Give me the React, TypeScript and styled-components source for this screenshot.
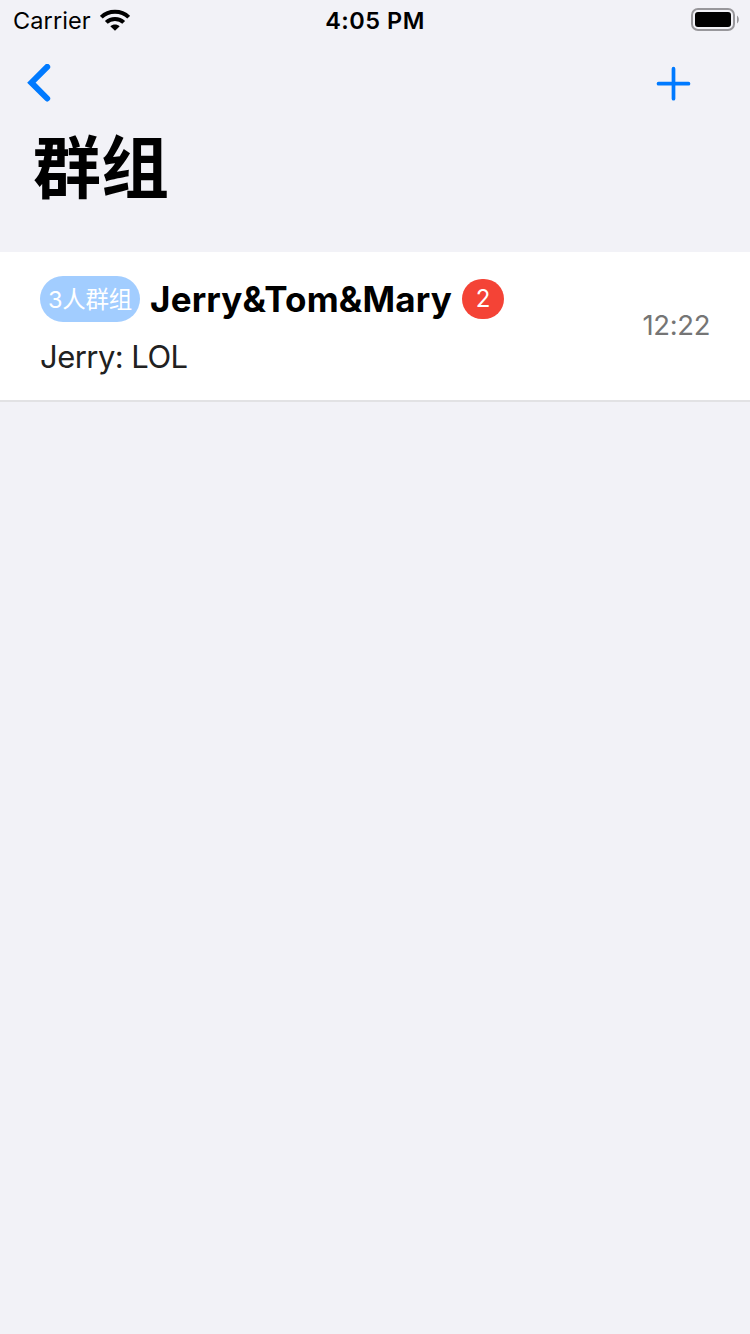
import React from "react";
import styled, { createGlobalStyle } from "styled-components";

const GlobalStyle = createGlobalStyle`
  * { box-sizing: border-box; }
  body {
    margin: 0;
    background: #f2f2f7;
    font-family: Inter, "Noto Sans CJK SC", sans-serif;
    color: #000;
  }
`;

const Screen = styled.div`
  width: 750px;
  height: 1334px;
  display: flex;
  flex-direction: column;
  background: #f2f2f7;
  overflow: hidden;
`;

const StatusBar = styled.header`
  height: 40px;
  padding: 0 13px;
  display: grid;
  grid-template-columns: 1fr auto 1fr;
  align-items: center;
  line-height: 38px;
`;

const Carrier = styled.div`
  display: flex;
  align-items: center;
  gap: 9px;
  font-size: 23.5px;
  letter-spacing: 0.1px;
`;

const CarrierName = styled.span`
  padding-top: 2px;
`;

const Clock = styled.div`
  padding-top: 2px;
  font-size: 23.5px;
  font-weight: 600;
  letter-spacing: 0.5px;
`;

const BatterySlot = styled.div`
  display: flex;
  justify-content: flex-end;
  margin-right: -2px;
`;

const NavBar = styled.nav`
  height: 88px;
  padding: 0 58px 0 26px;
  display: flex;
  align-items: center;
  justify-content: space-between;
`;

const IconButton = styled.button`
  display: flex;
  padding: 0;
  border: 0;
  background: none;
  color: #007aff;
`;

const Title = styled.h1`
  height: 124px;
  margin: 0;
  padding: 0 0 0 33px;
  font-family: "Noto Sans CJK SC", sans-serif;
  font-size: 68px;
  font-weight: 700;
  line-height: 72px;
`;

const GroupRow = styled.article`
  height: 150px;
  padding: 24px 40px 0;
  display: flex;
  justify-content: space-between;
  background: #fff;
  border-bottom: 2px solid #e2e2e4;
`;

const Summary = styled.div`
  display: flex;
  flex-direction: column;
`;

const Heading = styled.div`
  height: 46px;
  display: flex;
  align-items: center;
  gap: 10px;
`;

const MemberTag = styled.span`
  width: 100px;
  height: 46px;
  border-radius: 23px;
  background: #a2cdff;
  color: #fff;
  font-size: 23.5px;
  letter-spacing: -0.2px;
  line-height: 48px;
  text-align: center;
  white-space: nowrap;
`;

const GroupName = styled.span`
  font-size: 35px;
  font-weight: 700;
  letter-spacing: 0.18px;
  line-height: 46px;
  white-space: nowrap;
`;

const Unread = styled.span`
  width: 42px;
  height: 40px;
  border-radius: 20px;
  background: #f44336;
  color: #fff;
  font-size: 24px;
  line-height: 40px;
  text-align: center;
`;

const Preview = styled.p`
  margin: 12px 0 0;
  font-size: 31px;
  letter-spacing: -0.55px;
  line-height: 46px;
  color: #212121;
`;

const Time = styled.time`
  margin-top: 29px;
  font-size: 27.5px;
  letter-spacing: -0.4px;
  line-height: 40px;
  color: #757575;
`;

const WifiIcon = () => (
  <svg width="30" height="22" viewBox="0 0 30 22" fill="none" stroke="#000">
    <path d="M1.3 8.2C8.6 0.9 21.4 0.9 28.7 8.2" strokeWidth="4" />
    <path d="M6.3 13.4C11 8.7 19 8.7 23.7 13.4" strokeWidth="4" />
    <path d="M10.3 17.2C13 15 17 15 19.7 17.2L15 21.8Z" fill="#000" stroke="none" />
  </svg>
);

const BatteryIcon = () => (
  <svg width="48" height="24" viewBox="0 0 48 24">
    <rect x="1" y="1" width="42" height="21" rx="6" fill="none" stroke="#98979b" strokeWidth="2" />
    <rect x="4" y="4" width="36" height="15" rx="3" fill="#000" />
    <path d="M46 7.5C48.4 9 48.4 14 46 15.5Z" fill="#98979b" />
  </svg>
);

const BackIcon = () => (
  <svg width="26" height="40" viewBox="0 0 26 40" fill="none">
    <path d="M21.2 2.9L5.4 18.7L21.2 34.5" stroke="currentColor" strokeWidth="6" strokeLinecap="round" />
  </svg>
);

const PlusIcon = () => (
  <svg width="36" height="36" viewBox="0 0 36 36" fill="none">
    <path d="M17.5 2.7V32.7M2.5 17.7H32.5" stroke="currentColor" strokeWidth="3.7" strokeLinecap="round" />
  </svg>
);

const groups = [
  { tag: "3人群组", name: "Jerry&Tom&Mary", unread: 2, preview: "Jerry: LOL", time: "12:22" },
];

export default function App() {
  return (
    <Screen>
      <GlobalStyle />
      <StatusBar>
        <Carrier>
          <CarrierName>Carrier</CarrierName>
          <WifiIcon />
        </Carrier>
        <Clock>4:05 PM</Clock>
        <BatterySlot>
          <BatteryIcon />
        </BatterySlot>
      </StatusBar>
      <NavBar>
        <IconButton aria-label="Back">
          <BackIcon />
        </IconButton>
        <IconButton aria-label="Add">
          <PlusIcon />
        </IconButton>
      </NavBar>
      <Title>群组</Title>
      {groups.map((group) => (
        <GroupRow key={group.name}>
          <Summary>
            <Heading>
              <MemberTag>{group.tag}</MemberTag>
              <GroupName>{group.name}</GroupName>
              <Unread>{group.unread}</Unread>
            </Heading>
            <Preview>{group.preview}</Preview>
          </Summary>
          <Time>{group.time}</Time>
        </GroupRow>
      ))}
    </Screen>
  );
}
